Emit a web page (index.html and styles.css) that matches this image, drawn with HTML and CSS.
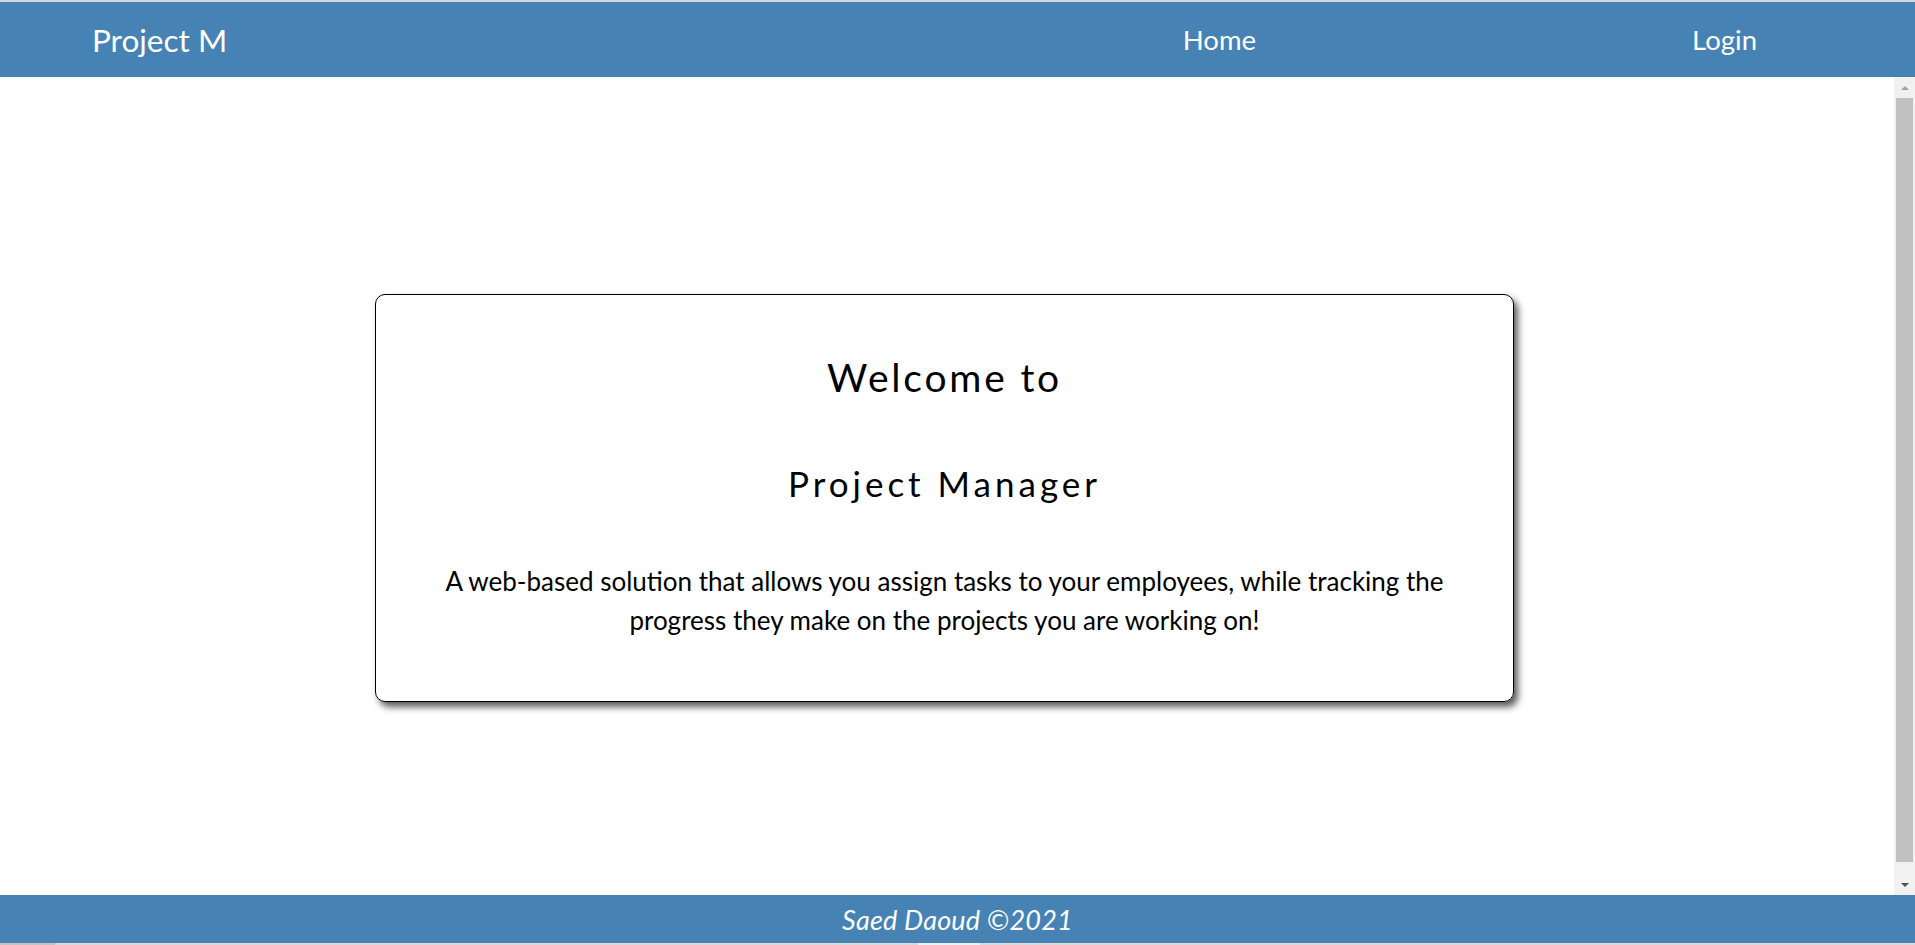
FILE: index.html
```html
<!DOCTYPE html>
<html lang="en">
<head>
<meta charset="utf-8">
<title>Project Manager</title>
<link rel="stylesheet" href="styles.css">
</head>
<body>
  <div class="top-strip"></div>
  <header class="navbar">
    <a class="brand" href="#">Project M</a>
    <nav class="nav-links">
      <a class="nav-link" href="#">Home</a>
      <a class="nav-link" href="#">Login</a>
    </nav>
  </header>
  <div class="middle">
    <main class="content">
      <section class="card">
        <h1 class="card-title">Welcome to</h1>
        <h2 class="card-subtitle">Project Manager</h2>
        <p class="card-text">A web-based solution that allows you assign tasks to your employees, while tracking the progress they make on the projects you are working on!</p>
      </section>
    </main>
    <div class="scrollbar">
      <div class="sb-btn"><span class="arrow-up"></span></div>
      <div class="sb-track"><div class="sb-thumb"></div></div>
      <div class="sb-btn"><span class="arrow-down"></span></div>
    </div>
  </div>
  <footer class="footer">Saed Daoud ©2021</footer>
  <div class="bottom-strip"></div>
</body>
</html>
```
FILE: styles.css
```css
* { box-sizing: border-box; }

html, body {
  margin: 0;
  padding: 0;
  height: 100%;
}

body {
  display: flex;
  flex-direction: column;
  overflow: hidden;
  font-family: "Lato", "Liberation Sans", sans-serif;
  background: #ffffff;
  color: #000;
}

.top-strip {
  height: 2px;
  background: #d6d6d6;
  flex: none;
}

.navbar {
  height: 75px;
  flex: none;
  background: #4682b4;
  display: flex;
  align-items: center;
  padding: 0 158px 0 92px;
}

.brand {
  color: #fff;
  text-decoration: none;
  font-size: 31.5px;
}

.nav-links {
  margin-left: auto;
  display: flex;
  align-items: center;
  gap: 436px;
}

.nav-link {
  color: #fff;
  text-decoration: none;
  font-size: 27.5px;
}

.middle {
  flex: 1;
  display: flex;
  min-height: 0;
}

.content {
  flex: 1;
  overflow: hidden;
  padding-top: 217px;
}

.card {
  width: 1139px;
  margin-left: 375px;
  border: 1px solid #000;
  border-radius: 10px;
  box-shadow: 4px 5px 7px rgba(0, 0, 0, 0.65);
  padding: 59px 60px 61px;
  text-align: center;
}

.card-title {
  margin: 0 0 61px;
  font-size: 39px;
  font-weight: 400;
  letter-spacing: 2.8px;
  line-height: 1.2;
}

.card-subtitle {
  margin: 0 0 58px;
  font-size: 35px;
  font-weight: 400;
  letter-spacing: 4px;
  line-height: 1.2;
}

.card-text {
  margin: 0;
  font-size: 26px;
  line-height: 39px;
}

.scrollbar {
  width: 21px;
  flex: none;
  background: #f1f1f1;
  display: flex;
  flex-direction: column;
}

.sb-btn {
  height: 21px;
  display: flex;
  align-items: center;
  justify-content: center;
}

.arrow-up {
  width: 0;
  height: 0;
  border-left: 4px solid transparent;
  border-right: 4px solid transparent;
  border-bottom: 4px solid #a3a3a3;
}

.arrow-down {
  width: 0;
  height: 0;
  border-left: 4px solid transparent;
  border-right: 4px solid transparent;
  border-top: 4px solid #505050;
}

.sb-track {
  flex: 1;
  padding: 0 2px 12px;
  display: flex;
}

.sb-thumb {
  flex: 1;
  background: #c1c1c1;
}

.footer {
  height: 48px;
  flex: none;
  background: #4682b4;
  color: #fff;
  display: flex;
  align-items: center;
  justify-content: center;
  font-style: italic;
  font-size: 27px;
  letter-spacing: 0.2px;
}

.bottom-strip {
  height: 2px;
  flex: none;
  background: linear-gradient(to right, #c4c4c4 0, #c4c4c4 55px, #d9d9d9 55px, #d9d9d9 918px, #f0f0f0 918px, #f0f0f0 980px, #d9d9d9 980px);
}
```
